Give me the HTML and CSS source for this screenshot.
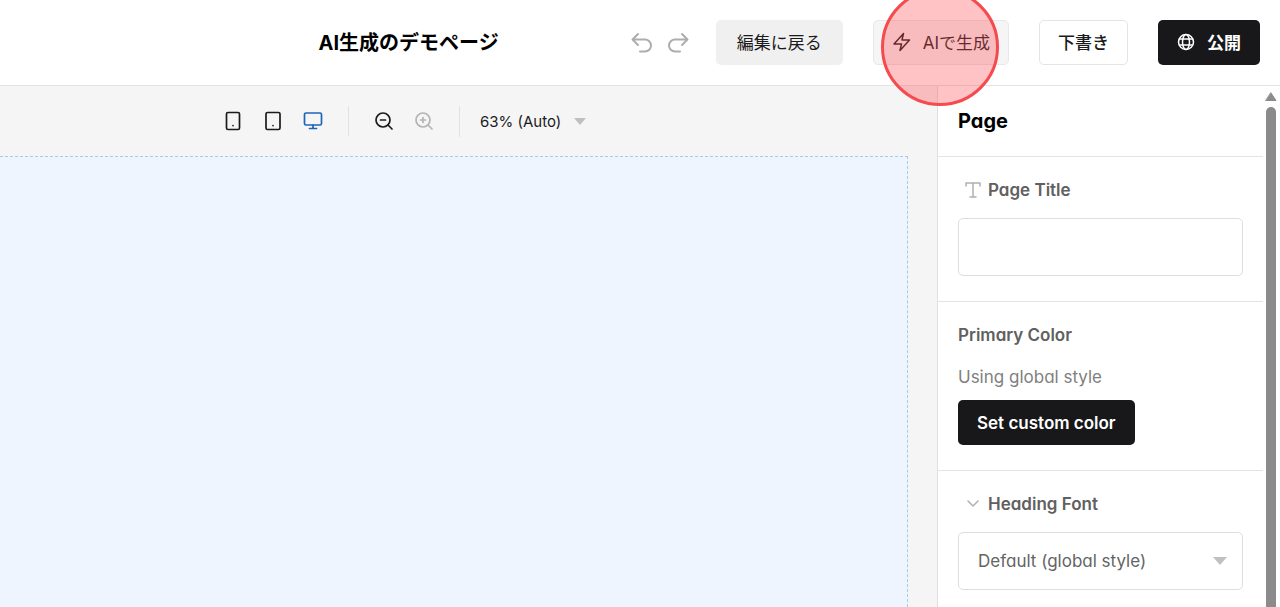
FILE: index.html
```html
<!DOCTYPE html>
<html lang="ja">
<head>
    <meta charset="UTF-8">
    <meta name="viewport" content="width=device-width, initial-scale=1.0">
    <title>AI生成のデモページ</title>
    <link rel="stylesheet" href="styles.css">
</head>
<body>
    <header class="topbar">
        <h1 class="page-name">AI生成のデモページ</h1>
        <div class="history">
            <button class="icon-button" aria-label="Undo">
                <svg width="22" height="22" viewBox="0 0 22 22"><path d="M7 2 1.500 7.500l5.500 5.500M1.500 7.500h12.500a6 6 0 0 1 0 12H9"/></svg>
            </button>
            <button class="icon-button" aria-label="Redo">
                <svg width="22" height="22" viewBox="0 0 22 22"><path d="M15 2l5.500 5.500-5.500 5.500M20.500 7.500H8a6 6 0 0 0 0 12h5"/></svg>
            </button>
        </div>
        <div class="actions">
            <button class="button button-gray">編集に戻る</button>
            <div class="highlighted">
                <button class="button button-light">
                    <svg width="20" height="20" viewBox="0 0 20 20"><path d="M11.500 1.500 2 12h7.500l-1.500 6.500L17.500 8H10z"/></svg>
                    AIで生成
                </button>
                <span class="highlight-circle"></span>
            </div>
            <button class="button button-outline">下書き</button>
            <button class="button button-dark">
                <svg width="18" height="18" viewBox="0 0 18 18"><circle cx="9" cy="9" r="7.500"/><ellipse cx="9" cy="9" rx="3.500" ry="7.500"/><path d="M2.500 6h13M2.500 12h13"/></svg>
                公開
            </button>
        </div>
    </header>

    <main class="editor">
        <section class="stage">
            <div class="toolbar">
                <div class="tools">
                    <button class="icon-button" aria-label="Mobile">
                        <svg width="20" height="20" viewBox="0 0 20 20"><rect x="3.500" y="1.500" width="13" height="17" rx="1.500"/><path d="M10 14.500v.1"/></svg>
                    </button>
                    <button class="icon-button" aria-label="Tablet">
                        <svg width="20" height="20" viewBox="0 0 20 20"><rect x="3" y="1.500" width="14" height="17" rx="1.500"/><path d="M10 14.500v.1"/></svg>
                    </button>
                    <button class="icon-button active" aria-label="Desktop">
                        <svg width="20" height="20" viewBox="0 0 20 20"><rect x="1.500" y="2" width="17" height="12" rx="1.500"/><path d="M10 14v3.500M6.500 17.500h7"/></svg>
                    </button>
                </div>
                <div class="tools divided">
                    <button class="icon-button" aria-label="Zoom out">
                        <svg width="20" height="20" viewBox="0 0 20 20"><circle cx="9" cy="9" r="7"/><path d="M14 14l4 4M6.500 9h5"/></svg>
                    </button>
                    <button class="icon-button muted" aria-label="Zoom in">
                        <svg width="20" height="20" viewBox="0 0 20 20"><circle cx="9" cy="9" r="7"/><path d="M14 14l4 4M6.500 9h5M9 6.500v5"/></svg>
                    </button>
                </div>
                <div class="divided">
                    <div class="select zoom">
                        <select aria-label="Zoom">
                            <option>63% (Auto)</option>
                        </select>
                        <svg class="caret" viewBox="0 0 14 8"><path d="M0 0h14L7 8z"/></svg>
                    </div>
                </div>
            </div>
            <div class="canvas"></div>
        </section>

        <aside class="sidebar">
            <div class="settings">
                <h2 class="settings-title">Page</h2>

                <div class="group">
                    <label class="label" for="page-title">
                        <svg class="label-icon" width="16" height="16" viewBox="0 0 16 16"><path d="M1 4V1h14v3M8 1v14M5 15h6"/></svg>
                        Page Title
                    </label>
                    <input class="text-input" id="page-title" type="text">
                </div>

                <div class="group">
                    <h3 class="label">Primary Color</h3>
                    <p class="hint">Using global style</p>
                    <button class="button button-dark">Set custom color</button>
                </div>

                <div class="group">
                    <label class="label" for="heading-font">
                        <svg class="label-icon" width="16" height="16" viewBox="0 0 16 16"><path d="M3 5l5 5 5-5"/></svg>
                        Heading Font
                    </label>
                    <div class="select">
                        <select class="text-input" id="heading-font">
                            <option>Default (global style)</option>
                        </select>
                        <svg class="caret" viewBox="0 0 14 8"><path d="M0 0h14L7 8z"/></svg>
                    </div>
                </div>
            </div>

            <div class="scrollbar">
                <svg width="12" height="10" viewBox="0 0 12 10"><path d="M6 1l5 7.500H1z"/></svg>
                <div class="thumb"></div>
            </div>
        </aside>
    </main>
</body>
</html>
```
FILE: styles.css
```css
* {
    box-sizing: border-box;
}

body {
    display: flex;
    flex-direction: column;
    height: 100vh;
    margin: 0;
    overflow: hidden;
    background-color: #fff;
    color: #1b1b1d;
    font-family: Inter, "Noto Sans CJK JP", sans-serif;
    font-feature-settings: "cv11";
    font-size: 17px;
}

h1, h2, h3, p {
    margin: 0;
}

svg {
    display: block;
    flex: none;
    fill: none;
    stroke: currentColor;
    stroke-width: 2;
    stroke-linecap: round;
    stroke-linejoin: round;
}

button, input, select {
    font: inherit;
    font-feature-settings: inherit;
    color: inherit;
}

/* top bar */
.topbar {
    display: flex;
    flex: none;
    align-items: center;
    justify-content: flex-end;
    height: 86px;
    padding: 0 20px;
    border-bottom: 1px solid #e4e4e4;
}

.page-name {
    margin-right: 132px;
    color: #000;
    font-size: 20px;
    font-weight: 700;
    line-height: 28px;
}

.history {
    display: flex;
    gap: 14px;
    margin-right: 27px;
    color: #adadad;
}

.actions {
    display: flex;
    gap: 30px;
}

.icon-button {
    padding: 0;
    border: none;
    background: none;
    cursor: pointer;
}

.button {
    display: flex;
    align-items: center;
    gap: 12px;
    height: 45px;
    padding: 0 18px;
    border: 1px solid transparent;
    border-radius: 5px;
    font-weight: 400;
    white-space: nowrap;
    cursor: pointer;
}

.button svg {
    stroke-width: 1.5;
}

.actions .button {
    padding-bottom: 2px;
}

.button-gray {
    padding: 0 20px;
    background-color: #f0f0f0;
}

.button-light {
    gap: 11px;
    border-color: #e8e8e8;
    background-color: #f5f5f5;
}

.button-outline {
    border-color: #e4e4e4;
    background-color: #fff;
    font-weight: 500;
}

.button-dark {
    background-color: #18181a;
    color: #fff;
    font-weight: 600;
}

.highlighted {
    position: relative;
}

.highlight-circle {
    position: absolute;
    z-index: 2;
    top: -32px;
    left: 8px;
    width: 118px;
    height: 118px;
    border: 3px solid #f54a4e;
    border-radius: 50%;
    background-color: rgba(255, 74, 80, 0.33);
    pointer-events: none;
}

/* editor */
.editor {
    display: flex;
    flex: 1;
    min-height: 0;
}

.stage {
    display: flex;
    flex: 1;
    flex-direction: column;
    padding-right: 29px;
    background-color: #f5f5f5;
}

.toolbar {
    display: flex;
    align-items: center;
    height: 70px;
    padding-left: 223px;
}

.toolbar svg {
    stroke-width: 1.7;
}

.tools {
    display: flex;
    gap: 20px;
}

.divided {
    margin-left: 25px;
    padding: 5px 0 5px 25px;
    border-left: 1px solid #e2e2e2;
}

.divided:last-child {
    padding-left: 20px;
}

.active {
    color: #1c66b8;
}

.muted {
    color: #b4b4b4;
}

.canvas {
    flex: 1;
    border: 1px dashed #a9cbe2;
    border-width: 1px 1px 0 0;
    background-color: #eff5fe;
}

/* sidebar */
.sidebar {
    display: flex;
    width: 343px;
    border-left: 1px solid #e0e0e0;
    background-color: #fff;
}

.settings {
    flex: 1;
    min-width: 0;
    overflow: hidden;
}

.settings-title {
    padding: 22px 20px;
    border-bottom: 1px solid #e4e4e4;
    color: #000;
    font-size: 20px;
    font-weight: 700;
    line-height: 26px;
}

.group {
    padding: 20px 20px 25px;
    border-bottom: 1px solid #e4e4e4;
}

.label {
    display: flex;
    align-items: center;
    gap: 7px;
    margin-bottom: 15px;
    color: #606060;
    font-size: 17px;
    font-weight: 600;
    line-height: 26px;
}

.label-icon {
    margin-left: 7px;
    color: #b0b0b0;
    stroke-width: 1.5;
}

.hint {
    margin-bottom: 9px;
    color: #808080;
    line-height: 28px;
}

.text-input {
    display: block;
    width: 100%;
    height: 58px;
    padding: 0 19px;
    border: 1px solid #dedede;
    border-radius: 5px;
    background-color: #fff;
    color: #646464;
}

.select {
    position: relative;
}

.select select {
    appearance: none;
    cursor: pointer;
}

.caret {
    position: absolute;
    top: 25px;
    right: 16px;
    width: 14px;
    height: 8px;
    fill: #c0c0c0;
    stroke: none;
    pointer-events: none;
}

.zoom select {
    width: 112px;
    padding: 0;
    border: none;
    background: none;
    font-size: 15px;
    line-height: 20px;
}

.zoom .caret {
    top: 7px;
    right: 6px;
    width: 12px;
    height: 7px;
}

.scrollbar {
    display: flex;
    flex: none;
    flex-direction: column;
    align-items: center;
    gap: 5px;
    width: 17px;
    padding: 6px 2px 0 0;
}

.scrollbar svg {
    fill: #8b8b8b;
    stroke: #8b8b8b;
    stroke-width: 1;
}

.thumb {
    flex: 1;
    width: 10px;
    border-radius: 5px 5px 0 0;
    background-color: #8b8b8b;
}
```
